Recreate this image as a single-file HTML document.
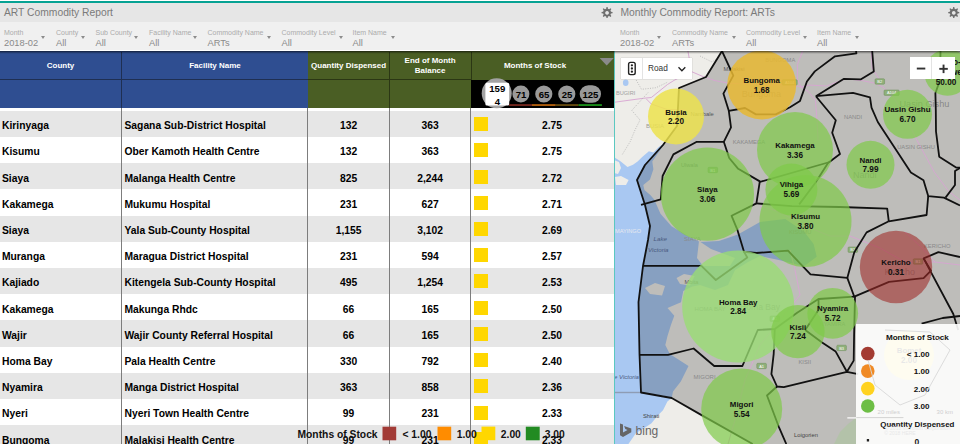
<!DOCTYPE html>
<html><head><meta charset="utf-8">
<style>
*{margin:0;padding:0;box-sizing:border-box}
html,body{width:960px;height:444px;overflow:hidden;background:#fff;font-family:"Liberation Sans",sans-serif;position:relative}
.abs{position:absolute}
#teal{position:absolute;left:0;top:1px;width:960px;height:2.6px;background:#06a293}
#tbar{position:absolute;left:0;top:3px;width:960px;height:19px;background:#e6e6e6}
#fbar{position:absolute;left:0;top:22px;width:960px;height:27.7px;background:#f0f0f0}
#shadow{position:absolute;left:0;top:51px;width:960px;height:2.6px;background:linear-gradient(rgba(0,0,0,0.6),rgba(0,0,0,0.12) 70%,rgba(0,0,0,0));z-index:5}
.title{position:absolute;top:7px;font-size:10.3px;color:#7a7a7a;white-space:nowrap}
.flt{position:absolute;top:28px;white-space:nowrap}
.fl{font-size:7.0px;color:#ababab;line-height:9px}
.fv{font-size:9.3px;color:#8a8a8a;line-height:11px;margin-top:0.7px}
.arr{position:absolute;top:36.3px;width:0;height:0;border-left:2.7px solid transparent;border-right:2.7px solid transparent;border-top:3.2px solid #8c8c8c}
#hdr{position:absolute;left:0;top:52px;width:614px;height:55.5px}
.h{position:absolute;padding-top:1.6px;color:#fff;font-weight:bold;font-size:8px;text-align:center;line-height:10.5px;display:flex;align-items:center;justify-content:center}
.row{position:absolute;left:0;width:614px;height:26.2px}
.row span{position:absolute;top:2.3px;line-height:26.2px;font-weight:bold;font-size:10.3px;color:#000;white-space:nowrap}
.c1{left:2px} .c2{left:124.5px}
.c3{left:307.6px;width:82px;text-align:center}
.c4{left:389.6px;width:81px;text-align:center}
.c5{left:530px;width:44px;text-align:center}
.sq{position:absolute;left:473.8px;top:6.4px;width:14px;height:14px;background:#ffd700}
.ml{font-family:"Liberation Sans",sans-serif;font-weight:bold;font-size:8.2px;text-anchor:middle;fill:#111}
.ctl{position:absolute;background:#fff;box-shadow:0 0 1px rgba(0,0,0,.3)}
.mn{font-size:7.9px}
.vl{position:absolute;top:107.5px;width:1px;height:337px;background:#7d7d7d}
</style></head><body>
<div id="teal"></div><div id="tbar"></div><div id="fbar"></div>
<div class="title" style="left:4px">ART Commodity Report</div>
<div class="title" style="left:620.5px">Monthly Commodity Report: ARTs</div>
<div class="flt" style="left:4px"><div class="fl">Month</div><div class="fv">2018-02</div></div><i class="arr" style="left:41px"></i>
<div class="flt" style="left:56px"><div class="fl">County</div><div class="fv">All</div></div><i class="arr" style="left:80.8px"></i>
<div class="flt" style="left:95.5px"><div class="fl">Sub County</div><div class="fv">All</div></div><i class="arr" style="left:134.2px"></i>
<div class="flt" style="left:149px"><div class="fl">Facility Name</div><div class="fv">All</div></div><i class="arr" style="left:193px"></i>
<div class="flt" style="left:207.5px"><div class="fl">Commodity Name</div><div class="fv">ARTs</div></div><i class="arr" style="left:267px"></i>
<div class="flt" style="left:281.5px"><div class="fl">Commodity Level</div><div class="fv">All</div></div><i class="arr" style="left:338.5px"></i>
<div class="flt" style="left:352.5px"><div class="fl">Item Name</div><div class="fv">All</div></div><i class="arr" style="left:390.6px"></i>
<div class="flt" style="left:620px"><div class="fl">Month</div><div class="fv">2018-02</div></div><i class="arr" style="left:657.3px"></i>
<div class="flt" style="left:672px"><div class="fl">Commodity Name</div><div class="fv">ARTs</div></div><i class="arr" style="left:731.5px"></i>
<div class="flt" style="left:746px"><div class="fl">Commodity Level</div><div class="fv">All</div></div><i class="arr" style="left:802.7px"></i>
<div class="flt" style="left:817px"><div class="fl">Item Name</div><div class="fv">All</div></div><i class="arr" style="left:854.8px"></i>
<div id="shadow"></div>

<!-- table header -->
<div class="abs" style="left:0;top:51px;width:307.6px;height:56.5px;background:#2f4e91"></div>
<div class="abs" style="left:307.6px;top:51px;width:306.4px;height:28.5px;background:#4a5e24"></div>
<div class="abs" style="left:307.6px;top:79.5px;width:163.5px;height:28px;background:#4a5e24"></div>
<div class="abs" style="left:471px;top:79.5px;width:143px;height:28px;background:#000"></div>
<div class="abs" style="left:0;top:79px;width:307.6px;height:1px;background:#1f2f52"></div><div class="abs" style="left:307.6px;top:79px;width:163.4px;height:1px;background:#2b3714"></div>
<div class="abs" style="left:121px;top:52px;width:1px;height:55.5px;background:#1f2f52"></div>
<div class="abs" style="left:389.2px;top:52px;width:1px;height:55.5px;background:#2b3714"></div>
<div class="abs" style="left:470.5px;top:52px;width:1px;height:27.5px;background:#2b3714"></div>
<div class="h" style="left:0;top:52px;width:121px;height:27px">County</div>
<div class="h" style="left:122px;top:52px;width:186px;height:27px">Facility Name</div>
<div class="h" style="left:307.6px;top:52px;width:82px;height:27px">Quantity Dispensed</div>
<div class="h" style="left:389.6px;top:52px;width:81px;height:27px">End of Month<br>Balance</div>
<div class="h" style="left:471px;top:52px;width:128px;height:27px">Months of Stock</div>

<div class="row" style="top:110.80px;background:#e6e6e6"><span class="c1">Kirinyaga</span><span class="c2">Sagana Sub-District Hospital</span><span class="c3">132</span><span class="c4">363</span><i class="sq"></i><span class="c5">2.75</span></div>
<div class="row" style="top:137.01px;background:#ffffff"><span class="c1">Kisumu</span><span class="c2">Ober Kamoth Health Centre</span><span class="c3">132</span><span class="c4">363</span><i class="sq"></i><span class="c5">2.75</span></div>
<div class="row" style="top:163.22px;background:#e6e6e6"><span class="c1">Siaya</span><span class="c2">Malanga Health Centre</span><span class="c3">825</span><span class="c4">2,244</span><i class="sq"></i><span class="c5">2.72</span></div>
<div class="row" style="top:189.43px;background:#ffffff"><span class="c1">Kakamega</span><span class="c2">Mukumu Hospital</span><span class="c3">231</span><span class="c4">627</span><i class="sq"></i><span class="c5">2.71</span></div>
<div class="row" style="top:215.64px;background:#e6e6e6"><span class="c1">Siaya</span><span class="c2">Yala Sub-County Hospital</span><span class="c3">1,155</span><span class="c4">3,102</span><i class="sq"></i><span class="c5">2.69</span></div>
<div class="row" style="top:241.85px;background:#ffffff"><span class="c1">Muranga</span><span class="c2">Maragua District Hospital</span><span class="c3">231</span><span class="c4">594</span><i class="sq"></i><span class="c5">2.57</span></div>
<div class="row" style="top:268.06px;background:#e6e6e6"><span class="c1">Kajiado</span><span class="c2">Kitengela Sub-County Hospital</span><span class="c3">495</span><span class="c4">1,254</span><i class="sq"></i><span class="c5">2.53</span></div>
<div class="row" style="top:294.27px;background:#ffffff"><span class="c1">Kakamega</span><span class="c2">Makunga Rhdc</span><span class="c3">66</span><span class="c4">165</span><i class="sq"></i><span class="c5">2.50</span></div>
<div class="row" style="top:320.48px;background:#e6e6e6"><span class="c1">Wajir</span><span class="c2">Wajir County Referral Hospital</span><span class="c3">66</span><span class="c4">165</span><i class="sq"></i><span class="c5">2.50</span></div>
<div class="row" style="top:346.69px;background:#ffffff"><span class="c1">Homa Bay</span><span class="c2">Pala Health Centre</span><span class="c3">330</span><span class="c4">792</span><i class="sq"></i><span class="c5">2.40</span></div>
<div class="row" style="top:372.90px;background:#e6e6e6"><span class="c1">Nyamira</span><span class="c2">Manga District Hospital</span><span class="c3">363</span><span class="c4">858</span><i class="sq"></i><span class="c5">2.36</span></div>
<div class="row" style="top:399.11px;background:#ffffff"><span class="c1">Nyeri</span><span class="c2">Nyeri Town Health Centre</span><span class="c3">99</span><span class="c4">231</span><i class="sq"></i><span class="c5">2.33</span></div>
<div class="row" style="top:425.32px;background:#e6e6e6"><span class="c1">Bungoma</span><span class="c2">Malakisi Health Centre</span><span class="c3">99</span><span class="c4">231</span><i class="sq"></i><span class="c5">2.33</span></div>
<div class="vl" style="left:121px"></div>
<div class="vl" style="left:307.2px"></div>
<div class="vl" style="left:389.2px"></div>
<div class="vl" style="left:470.2px"></div>

<!-- header bubbles -->
<svg class="abs" style="left:0;top:0" width="960" height="444">
<circle cx="496.7" cy="93.3" r="15" fill="#a3a3a3"/>
<rect x="485.4" y="82.7" width="23.8" height="22.7" rx="1.5" fill="#fff"/>
<circle cx="520.9" cy="94" r="8.5" fill="#9a9a9a"/>
<circle cx="543.8" cy="94" r="8.6" fill="#9a9a9a"/>
<circle cx="566.8" cy="94" r="8.6" fill="#9a9a9a"/>
<rect x="579.7" y="85.2" width="21.3" height="17.5" rx="8.75" fill="#9a9a9a"/>
<rect x="509" y="104.2" width="23" height="1.7" fill="#7e2a20"/>
<rect x="532" y="104.2" width="23.7" height="1.7" fill="#c0660e"/>
<rect x="555.7" y="104.2" width="22.9" height="1.7" fill="#6e5010"/>
<rect x="578.6" y="104.2" width="23.3" height="1.7" fill="#1c9c1c"/>
<polygon points="599.6,58 613.8,58 606.7,65.5" fill="#8a8a8a"/>
<g font-family="Liberation Sans" font-weight="bold" font-size="9.6" fill="#000" text-anchor="middle">
<text x="497.3" y="91.6">159</text><text x="497.3" y="105.2">4</text>
<text x="521" y="98.4">71</text><text x="544" y="98.3">65</text><text x="567" y="98.3">25</text><text x="590.4" y="98.3">125</text>
</g>
<!-- gears -->
<g fill="#6f6f6f" transform="translate(0,0.8)">
<path id="gear" d="M606.5,6.3 l1.1,0 .35,1.6 a4.3,4.3 0 0 1 1.2,.5 l1.4,-.9 .8,.8 -.9,1.4 a4.3,4.3 0 0 1 .5,1.2 l1.6,.35 0,1.1 -1.6,.35 a4.3,4.3 0 0 1 -.5,1.2 l.9,1.4 -.8,.8 -1.4,-.9 a4.3,4.3 0 0 1 -1.2,.5 l-.35,1.6 -1.1,0 -.35,-1.6 a4.3,4.3 0 0 1 -1.2,-.5 l-1.4,.9 -.8,-.8 .9,-1.4 a4.3,4.3 0 0 1 -.5,-1.2 l-1.6,-.35 0,-1.1 1.6,-.35 a4.3,4.3 0 0 1 .5,-1.2 l-.9,-1.4 .8,-.8 1.4,.9 a4.3,4.3 0 0 1 1.2,-.5 z M607.05,10.2 a1.9,1.9 0 1 0 .01,0 z" fill-rule="evenodd"/>
<use href="#gear" x="346.7" y="0"/>
</g>
<!-- table legend -->
<g font-family="Liberation Sans" font-weight="bold" font-size="10.3" fill="#111">
<text x="297.5" y="437.8">Months of Stock</text>
<rect x="382.5" y="426.7" width="13.7" height="13.6" fill="#a23b36"/>
<text x="402.5" y="437.8">&lt; 1.00</text>
<rect x="437.5" y="426.7" width="13.7" height="13.6" fill="#ff8c00"/>
<text x="456.7" y="437.8">1.00</text>
<rect x="481.5" y="426.6" width="13.8" height="13.6" fill="#ffd700"/>
<text x="500.8" y="437.8">2.00</text>
<rect x="525.8" y="426.7" width="13.9" height="13.6" fill="#228b22"/>
<text x="544.7" y="437.8">3.00</text>
</g>
</svg>
<div class="abs" style="left:614px;top:51px;width:1.2px;height:393px;background:#5bc8c0"></div>

<svg class="abs" style="left:0;top:0" width="960" height="444" viewBox="0 0 960 444">
<defs><clipPath id="mc"><rect x="615" y="51" width="345" height="393"/></clipPath></defs>
<g clip-path="url(#mc)">
<rect x="614" y="51" width="346" height="393" fill="#eeede9"/>
<polygon points="614,157 620.8,161.4 627.5,167 633,164.8 637.6,161.4 642.2,156.9 648.9,151.3 653.4,152.4 659,146.8 665,143 652.3,161.4 653.4,169.3 650,179.4 643.3,185 644.4,190 650.3,195 654.2,199.5 660.5,213.7 671.5,226.3 687.3,235.7 700,242 718.9,241 737.9,234.6 760,222 785.2,218.9 804,231.5 813.6,244 816.7,256.7 804,266.2 778.9,259.9 760,256 748,262 735,270 728,285 715,290 700,285 692.3,286.5 683.3,291 681,302.3 667.5,308 674.3,315.8 671,324.8 667.5,336 665.3,345 669.8,354 688.5,366 680.8,381.4 673,391.6 671.7,398 667.4,401.6 663,410.3 657.3,416 651.5,423.3 642.9,429 636,433 632.8,437.7 628.4,444 614,444" fill="#a9c8f2"/>
<polygon points="699,241 711,249 735,258 730,266 703,266 697,258" fill="#eeede9"/>
<polygon points="676.5,278 684,274 694.6,276 690,285.4 680,284" fill="#eeede9"/>
<polygon points="645,288 655,283 665,286 662,295.5 650,294" fill="#eeede9"/>
<polygon points="614,160 619,162 621,168 618,174 614,173" fill="#eeede9"/>
<polygon points="615,177 621,176 628.6,180 626,185 616,185" fill="#eeede9"/>
<polygon points="722,51 706,77 679,88 677,126 663,145 645,165 637,180 645,205 650,226 648,240 643,266 638.5,302 639.5,354 641,392.5 663,395.5 673,398 702,415.4 752.7,444 960,444 960,51" fill="#000" fill-opacity="0.2"/>
<polyline points="614,102.3 643.2,98.3 651.3,97.5 667.5,84.5 674,80.4 691.5,71.6 704,77 715,80.6 729.3,83.3 772.6,85 790,84 801,87 810,85.1 826.3,86 846,78.8 862.3,80.6 875,83.3 884,87.8 893,96.8 905,115 915.6,137.8 934.5,172.4 944,185 948.7,191.3 960,200" fill="none" stroke="#d7a4d2" stroke-width="1" opacity="0.9"/>
<polyline points="802.8,51 797.4,64.4 797.4,78.8 801,87 808.2,91.4 815.4,100.5 817.2,122 818,140" fill="none" stroke="#d7a4d2" stroke-width="1" opacity="0.9"/>
<polyline points="871.3,51 872.2,68 876.7,75.2 880.3,80.6" fill="none" stroke="#d7a4d2" stroke-width="1" opacity="0.9"/>
<polyline points="687.9,51 689.7,60.8" fill="none" stroke="#d7a4d2" stroke-width="1" opacity="0.9"/>
<polyline points="646.4,99 651.3,104 667.5,109.6 686,109.5" fill="none" stroke="#d7a4d2" stroke-width="1" opacity="0.9"/>
<polyline points="760,206 780,212 800,224 830,236 850,236 880,248 905,262 935,262 960,265" fill="none" stroke="#d7a4d2" stroke-width="1" opacity="0.9"/>
<polyline points="790,250 795,270 800,295 780,320 760,345 745,380 735,420 728,444" fill="none" stroke="#d7a4d2" stroke-width="1" opacity="0.9"/>
<polyline points="905,232 920,246 935,262" fill="none" stroke="#d7a4d2" stroke-width="1" opacity="0.9"/>
<polygon points="834,444 840,432 848,424 856,418 856,444" fill="#a9c79a" opacity="0.55"/>
<ellipse cx="625.7" cy="82.8" rx="2.8" ry="3.2" fill="#a9c8f2"/>
<polyline points="635,78 641.5,89.3 656,87.7 668,82" fill="none" stroke="#b0b0b0" stroke-width="0.8" stroke-dasharray="1,1.4"/>
<polyline points="648,92.6 631.8,110.4 640,120 635,130 630.2,141.6 622,155" fill="none" stroke="#b0b0b0" stroke-width="0.8" stroke-dasharray="1,1.4"/>
<polyline points="700,56 712,62 718,58" fill="none" stroke="#b0b0b0" stroke-width="0.8" stroke-dasharray="1,1.4"/>
<polyline points="614,392.5 641,392.5" fill="none" stroke="#8e9cb4" stroke-width="1.4"/>
<rect x="875" y="78.8" width="9.6" height="5.4" rx="1" fill="#8fb07a" stroke="#6d8f5a" stroke-width="0.5"/>
<text x="879.8" y="83.1" font-family="Liberation Sans" font-size="4" fill="#fff" text-anchor="middle">B2</text>
<rect x="884" y="90" width="15.2" height="5.4" rx="1" fill="#8fb07a" stroke="#6d8f5a" stroke-width="0.5"/>
<text x="891.6" y="94.3" font-family="Liberation Sans" font-size="4" fill="#fff" text-anchor="middle">A104</text>
<rect x="782" y="79.7" width="15.2" height="5.4" rx="1" fill="#8fb07a" stroke="#6d8f5a" stroke-width="0.5"/>
<text x="789.6" y="84.0" font-family="Liberation Sans" font-size="4" fill="#fff" text-anchor="middle">A104</text>
<rect x="708" y="167.3" width="9.6" height="5.4" rx="1" fill="#8fb07a" stroke="#6d8f5a" stroke-width="0.5"/>
<text x="712.8" y="171.60000000000002" font-family="Liberation Sans" font-size="4" fill="#fff" text-anchor="middle">B1</text>
<rect x="756.8" y="363.3" width="9.6" height="5.4" rx="1" fill="#8fb07a" stroke="#6d8f5a" stroke-width="0.5"/>
<text x="761.6" y="367.6" font-family="Liberation Sans" font-size="4" fill="#fff" text-anchor="middle">A1</text>
<rect x="836.8" y="345.2" width="9.6" height="5.4" rx="1" fill="#8fb07a" stroke="#6d8f5a" stroke-width="0.5"/>
<text x="841.6" y="349.5" font-family="Liberation Sans" font-size="4" fill="#fff" text-anchor="middle">B3</text>
<rect x="913.2" y="258.8" width="9.6" height="5.4" rx="1" fill="#8fb07a" stroke="#6d8f5a" stroke-width="0.5"/>
<text x="918.0" y="263.1" font-family="Liberation Sans" font-size="4" fill="#fff" text-anchor="middle">B1</text>
<rect x="848" y="247" width="9.6" height="5.4" rx="1" fill="#8fb07a" stroke="#6d8f5a" stroke-width="0.5"/>
<text x="852.8" y="251.3" font-family="Liberation Sans" font-size="4" fill="#fff" text-anchor="middle">B1</text>
<rect x="770" y="316" width="9.6" height="5.4" rx="1" fill="#8fb07a" stroke="#6d8f5a" stroke-width="0.5"/>
<text x="774.8" y="320.3" font-family="Liberation Sans" font-size="4" fill="#fff" text-anchor="middle">A1</text>
<text x="616" y="95" font-family="Liberation Sans" font-size="5.6" fill="#a0a0a0">BUGIRI</text>
<text x="646" y="127.7" font-family="Liberation Sans" font-size="6" fill="#9a9a9a">BUSIA</text>
<text x="690.6" y="116.4" font-family="Liberation Sans" font-size="5.8" fill="#555">Nambale</text>
<text x="723.6" y="71.4" font-family="Liberation Sans" font-size="5.8" fill="#555">Malakisi</text>
<text x="765.3" y="61.7" font-family="Liberation Sans" font-size="5.8" fill="#8a8a8a">BUNGOMA</text>
<text x="741.7" y="97.3" font-family="Liberation Sans" font-size="9.2" fill="rgba(110,110,110,0.7)">Bungoma</text>
<text x="732.7" y="143.5" font-family="Liberation Sans" font-size="5.8" fill="#8a8a8a">KAKAMEGA</text>
<text x="844" y="119.4" font-family="Liberation Sans" font-size="5.8" fill="#8a8a8a">NANDI</text>
<text x="899.4" y="107.4" font-family="Liberation Sans" font-size="9.2" fill="rgba(110,110,110,0.7)">Uasin Gishu</text>
<text x="897.2" y="149" font-family="Liberation Sans" font-size="5.8" fill="#8a8a8a">UASIN GISHU</text>
<text x="681" y="166.5" font-family="Liberation Sans" font-size="5.6" fill="#7a7a7a">Ulwala</text>
<text x="653.6" y="241.2" font-family="Liberation Sans" font-size="6.2" fill="#4a5a80" font-style="italic">Lake</text>
<text x="648" y="252.4" font-family="Liberation Sans" font-size="6.2" fill="#4a5a80" font-style="italic">Victoria</text>
<text x="684" y="241.2" font-family="Liberation Sans" font-size="6" fill="#8a8a8a">SIAYA</text>
<text x="615" y="233.3" font-family="Liberation Sans" font-size="5.6" fill="#e8e8f0">MAYINGO</text>
<text x="684.4" y="283.8" font-family="Liberation Sans" font-size="5.8" fill="#555">Mbita</text>
<text x="694.6" y="311.3" font-family="Liberation Sans" font-size="6" fill="#8a8a8a">HOMA BAY</text>
<text x="740" y="310" font-family="Liberation Sans" font-size="8.6" fill="rgba(110,110,110,0.6)">Homa Bay</text>
<text x="693.6" y="378.8" font-family="Liberation Sans" font-size="6" fill="#8a8a8a">MIGORI</text>
<text x="642.9" y="417.8" font-family="Liberation Sans" font-size="5.8" fill="#444">Shirati</text>
<text x="614" y="379.3" font-family="Liberation Sans" font-size="6" fill="#4a5a80" font-style="italic">e Victoria</text>
<text x="789" y="233.8" font-family="Liberation Sans" font-size="5.8" fill="rgba(120,120,120,0.7)">KISUMU</text>
<text x="798.5" y="364" font-family="Liberation Sans" font-size="5.8" fill="#8a8a8a">KISII</text>
<text x="819.5" y="326" font-family="Liberation Sans" font-size="5.8" fill="rgba(120,120,120,0.6)">NYAMIRA</text>
<text x="924" y="248" font-family="Liberation Sans" font-size="5.8" fill="#8a8a8a">KERICHO</text>
<text x="884.4" y="275" font-family="Liberation Sans" font-size="9" fill="rgba(110,110,110,0.6)">Kericho</text>
<text x="794" y="437" font-family="Liberation Sans" font-size="5.8" fill="#444">Loigorien</text>
<text x="853" y="178" font-family="Liberation Sans" font-size="9" fill="rgba(110,110,110,0.6)">Nandi</text>
<text x="877.6" y="414" font-family="Liberation Sans" font-size="6" fill="#aaa">20 miles</text>
<text x="936.6" y="414" font-family="Liberation Sans" font-size="6" fill="#aaa">30 km</text>
<polyline points="722,51 706,77 679,88 677,126 663,145 645,165 637,180 645,205 650,226 648,240 643,266 638.5,302 639.5,354 641,392.5 671.7,398 702,415.4 752.7,444" fill="none" stroke="#111" stroke-width="1.8" stroke-linejoin="round"/>
<polyline points="722,51 733.3,75.6 723.4,93.6 728.8,110.8 731,127.4 723.8,141.8 729.2,158 738.2,168.8 759.8,181.4 756.4,203.4 731.6,215.8 737.2,229.3 744,251.8 756.4,253 788,250.7 810.5,274.4 847.3,277.9 854.3,252.2 866.6,232.4 888.8,221.3" fill="none" stroke="#111" stroke-width="1.8" stroke-linejoin="round"/>
<polyline points="728.8,110.8 745,108 755.9,114.4 775.7,114.4 790,107.2 800,100.9 806.9,81.5 814.8,71.4 835,56.3 856.4,53.4 856,51" fill="none" stroke="#111" stroke-width="1.8" stroke-linejoin="round"/>
<polyline points="641,204.8 660.8,199.4 662.6,176 673.4,154.4 696.8,141.8 723.8,141.8" fill="none" stroke="#111" stroke-width="1.8" stroke-linejoin="round"/>
<polyline points="872.2,51 873.8,71.4 861,79.3 844,78.8 815.9,96.2" fill="none" stroke="#111" stroke-width="1.8" stroke-linejoin="round"/>
<polyline points="815.9,96.2 853,92.8 870,97.3 871.5,107.6 877.8,122 910.9,172.4 923.5,180.3 928.2,196.1 943.9,197.6 960,205.5" fill="none" stroke="#111" stroke-width="1.8" stroke-linejoin="round"/>
<polyline points="815.9,96.2 835.8,120.2 832.2,132.8 840,154 828,163 815.4,182.8 799.2,204.4" fill="none" stroke="#111" stroke-width="1.8" stroke-linejoin="round"/>
<polyline points="759.6,182 829.8,162" fill="none" stroke="#111" stroke-width="1.8" stroke-linejoin="round"/>
<polyline points="756.4,203.4 792,206.2 840,207 887.2,208.7 888.8,221.3" fill="none" stroke="#111" stroke-width="1.8" stroke-linejoin="round"/>
<polyline points="928.2,196.1 926.6,215 888.8,221.3" fill="none" stroke="#111" stroke-width="1.8" stroke-linejoin="round"/>
<polyline points="960,168 955,171 955,185 945.5,197.6" fill="none" stroke="#111" stroke-width="1.8" stroke-linejoin="round"/>
<polyline points="940.5,51 940,80 935.4,93.2 935.8,110 936,131.5 939.2,156.7 956.5,167.7 960,167.7" fill="none" stroke="#111" stroke-width="1.8" stroke-linejoin="round"/>
<polyline points="643,265.8 701.4,265.8 715.8,280 747.3,257.5 744,251.8" fill="none" stroke="#111" stroke-width="1.8" stroke-linejoin="round"/>
<polyline points="639.5,354.9 668,354.9 693.6,348.5 714.2,366 742.4,366 757.8,330 774.8,329 797.5,312.4 818.5,299 854.3,296.7" fill="none" stroke="#111" stroke-width="1.8" stroke-linejoin="round"/>
<polyline points="774.8,329 773.7,353.8 771.4,374.1 777,386.5 783.8,387.2 846.9,371.8 858.2,374.1" fill="none" stroke="#111" stroke-width="1.8" stroke-linejoin="round"/>
<polyline points="777,386.5 767,395.5 778.6,426.3 786.3,444" fill="none" stroke="#111" stroke-width="1.8" stroke-linejoin="round"/>
<polyline points="805.2,330.1 822.1,342.5 835.7,351.6 846.9,371.8" fill="none" stroke="#111" stroke-width="1.8" stroke-linejoin="round"/>
<polyline points="818.5,299 818.6,309.8 805.2,330.1" fill="none" stroke="#111" stroke-width="1.8" stroke-linejoin="round"/>
<polyline points="846.9,371.8 853.7,360.6 854.1,334.7 855,297" fill="none" stroke="#111" stroke-width="1.8" stroke-linejoin="round"/>
<polyline points="847.3,277.9 854.3,296.7 889,281.9 923.6,278.2 931,270.7 923.6,258.4 938.4,252.2 960,257" fill="none" stroke="#111" stroke-width="1.8" stroke-linejoin="round"/>
<polyline points="923.6,258.4 953.3,314 958.2,330" fill="none" stroke="#111" stroke-width="1.8" stroke-linejoin="round"/>
<polyline points="921.6,323.6 942.7,318 960,316" fill="none" stroke="#111" stroke-width="1.8" stroke-linejoin="round"/>
<circle cx="761.7" cy="85" r="34.5" fill="rgba(232,185,50,0.85)"/>
<circle cx="676" cy="116.5" r="28" fill="rgba(236,226,78,0.85)"/>
<circle cx="707.4" cy="194.2" r="46.6" fill="rgba(127,202,72,0.7)"/>
<circle cx="795" cy="150" r="38" fill="rgba(127,202,72,0.7)"/>
<circle cx="805.5" cy="221" r="46" fill="rgba(127,202,72,0.7)"/>
<circle cx="791.4" cy="189.4" r="26" fill="rgba(127,202,72,0.7)"/>
<circle cx="870.5" cy="164.8" r="24" fill="rgba(127,202,72,0.7)"/>
<circle cx="907.5" cy="114.3" r="24.5" fill="rgba(127,202,72,0.7)"/>
<circle cx="947.5" cy="72.5" r="23.2" fill="rgba(127,202,72,0.7)"/>
<circle cx="738.2" cy="306.5" r="56" fill="rgba(152,221,114,0.78)"/>
<circle cx="896" cy="267" r="36.2" fill="rgba(159,42,38,0.58)"/>
<circle cx="832.7" cy="313.3" r="25.4" fill="rgba(127,202,72,0.7)"/>
<circle cx="797.9" cy="331.6" r="26.7" fill="rgba(127,202,72,0.7)"/>
<circle cx="741.7" cy="409" r="40.5" fill="rgba(127,202,72,0.7)"/>
<circle cx="909" cy="355" r="25" fill="rgba(250,230,80,0.8)"/>
<text x="761.7" y="83" class="ml mn">Bungoma</text>
<text x="761.7" y="92.5" class="ml">1.68</text>
<text x="676" y="114.5" class="ml mn">Busia</text>
<text x="676" y="124.0" class="ml">2.20</text>
<text x="707.4" y="192.2" class="ml mn">Siaya</text>
<text x="707.4" y="201.7" class="ml">3.06</text>
<text x="795" y="148" class="ml mn">Kakamega</text>
<text x="795" y="157.5" class="ml">3.36</text>
<text x="805.5" y="219" class="ml mn">Kisumu</text>
<text x="805.5" y="228.5" class="ml">3.80</text>
<text x="791.4" y="187.4" class="ml mn">Vihiga</text>
<text x="791.4" y="196.9" class="ml">5.69</text>
<text x="870.5" y="162.8" class="ml mn">Nandi</text>
<text x="870.5" y="172.3" class="ml">7.99</text>
<text x="907.5" y="112.3" class="ml mn">Uasin Gishu</text>
<text x="907.5" y="121.8" class="ml">6.70</text>
<text x="946.0" y="65" class="ml">Elgeyo-</text><text x="946.0" y="75" class="ml">Marakwet</text><text x="946.0" y="84.5" class="ml">50.00</text>
<text x="738.2" y="304.5" class="ml mn">Homa Bay</text>
<text x="738.2" y="314.0" class="ml">2.84</text>
<text x="896" y="265" class="ml mn">Kericho</text>
<text x="896" y="274.5" class="ml">0.31</text>
<text x="832.7" y="311.3" class="ml mn">Nyamira</text>
<text x="832.7" y="320.8" class="ml">5.72</text>
<text x="797.9" y="329.6" class="ml mn">Kisii</text>
<text x="797.9" y="339.1" class="ml">7.24</text>
<text x="741.7" y="407" class="ml mn">Migori</text>
<text x="741.7" y="416.5" class="ml">5.54</text>
<text x="909" y="353" class="ml mn">Bomet</text>
<text x="909" y="362.5" class="ml">2.00</text>
</g></svg>
<div class="ctl" style="left:620.8px;top:57.9px;width:71px;height:21.4px"></div>
<div class="abs" style="left:642.2px;top:57.9px;width:1px;height:21.4px;background:#e3e3e3"></div>
<div class="abs" style="left:909.5px;top:57.2px;width:45px;height:22px;background:#fff"></div>
<div class="abs" style="left:931.4px;top:57.2px;width:1px;height:22px;background:#e3e3e3"></div>
<div class="abs" style="left:856.3px;top:323.6px;width:104px;height:121px;background:rgba(255,255,255,0.9)"></div>
<svg class="abs" style="left:0;top:0" width="960" height="444">
<rect x="628.6" y="62.4" width="6.6" height="12.2" rx="1.8" fill="none" stroke="#222" stroke-width="1.4"/>
<circle cx="631.9" cy="65.3" r="1.15" fill="#222"/><circle cx="631.9" cy="68.5" r="1.15" fill="#222"/><circle cx="631.9" cy="71.7" r="1.15" fill="#222"/>
<text x="648" y="71.4" font-family="Liberation Sans" font-size="8.3" fill="#333">Road</text>
<polyline points="678.5,67.3 681.9,70.8 685.3,67.3" fill="none" stroke="#222" stroke-width="1.3"/>
<rect x="916.8" y="67.6" width="8.5" height="1.9" fill="#333"/>
<rect x="939.3" y="67.9" width="8.5" height="1.9" fill="#333"/>
<rect x="942.6" y="64.6" width="1.9" height="8.5" fill="#333"/>
<g font-family="Liberation Sans" font-weight="bold" font-size="8.1" fill="#111">
<text x="917.4" y="339.8" text-anchor="middle">Months of Stock</text>
<text x="929.5" y="356.6" text-anchor="end">&lt; 1.00</text>
<text x="929.5" y="374.1" text-anchor="end">1.00</text>
<text x="929.5" y="391.6" text-anchor="end">2.00</text>
<text x="929.5" y="409" text-anchor="end">3.00</text>
<text x="917.4" y="427" text-anchor="middle" font-size="7.9">Quantity Dispensed</text>
</g>
<circle cx="867.8" cy="353.6" r="6.8" fill="#a33b32"/>
<circle cx="867.8" cy="371.1" r="6.8" fill="#f08a24"/>
<circle cx="867.8" cy="388.6" r="6.8" fill="#ffd21f"/>
<circle cx="867.8" cy="406" r="6.8" fill="#6dbe45"/>
<rect x="847.3" y="417.3" width="9" height="1.2" fill="#fff"/>
<g fill="none" stroke="#d8d8d8" stroke-width="0.9"><polyline points="885,330 930,332 950,350 925,395 900,405 875,385 868,360"/></g>
<line x1="856.3" y1="417.6" x2="903.4" y2="417.6" stroke="#c8c8c8" stroke-width="0.8"/>
<text x="877.6" y="414" font-family="Liberation Sans" font-size="6" fill="#d0d0d0">20 miles</text>
<text x="936.6" y="414" font-family="Liberation Sans" font-size="6" fill="#d0d0d0">30 km</text>
<text x="885" y="429.5" font-family="Liberation Sans" font-size="5" fill="#e8e8e8">© 2018 Microsoft Corporation</text><text x="884.2" y="435" font-family="Liberation Sans" font-size="5" fill="#e8e8e8">© 2018 HERE</text>
<rect x="866.8" y="439" width="2.3" height="2.5" fill="#222"/>
<text x="914.5" y="445.3" font-family="Liberation Sans" font-weight="bold" font-size="8.5" fill="#222">0</text>
<!-- bing -->
<path d="M620,423.5 l3,1 v8 l4.5,-2.6 -2.2,-1 -1.2,-2.8 7.2,2.5 v3.6 l-8.3,4.8 -3,-1.7 z" fill="#666"/>
<text x="635.6" y="435" font-family="Liberation Sans" font-size="12" fill="#666">bing</text>
</svg>

</body></html>
